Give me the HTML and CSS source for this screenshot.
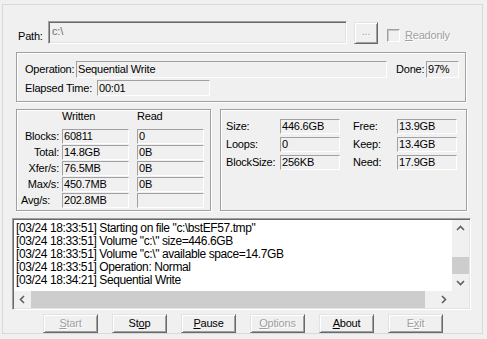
FILE: index.html
```html
<!doctype html>
<html lang="en">
  <head>
    <meta charset="utf-8" />
    <meta name="viewport" content="width=device-width, initial-scale=1" />
    <title>Disk Benchmark</title>
    <link rel="stylesheet" href="styles.css">
  </head>
  <body>
    <div class="frame">
      <div class="path-row">
        <span class="path-label">Path:</span>
        <div class="path-edit">c:\</div>
        <div class="btn browse">...</div>
        <div class="check">
          <span class="check-box"></span>
          <span class="check-text"><u>R</u>eadonly</span>
        </div>
      </div>

      <div class="group op-group">
        <div class="op-row">
          <span class="op-lbl">Operation:</span>
          <div class="field op-field">Sequential Write</div>
          <span class="done-lbl">Done:</span>
          <div class="field done-field">97%</div>
        </div>
        <div class="op-row elapsed-row">
          <span class="elapsed-lbl">Elapsed Time:</span>
          <div class="field elapsed-field">00:01</div>
        </div>
      </div>

      <div class="stats">
        <div class="group io-group">
          <div class="io-head">
            <span class="io-head-w">Written</span>
            <span>Read</span>
          </div>
          <div class="io-row">
            <span class="io-lbl">Blocks:</span>
            <div class="field io-field">60811</div>
            <div class="field io-field">0</div>
          </div>
          <div class="io-row">
            <span class="io-lbl">Total:</span>
            <div class="field io-field">14.8GB</div>
            <div class="field io-field">0B</div>
          </div>
          <div class="io-row">
            <span class="io-lbl">Xfer/s:</span>
            <div class="field io-field">76.5MB</div>
            <div class="field io-field">0B</div>
          </div>
          <div class="io-row">
            <span class="io-lbl">Max/s:</span>
            <div class="field io-field">450.7MB</div>
            <div class="field io-field">0B</div>
          </div>
          <div class="io-row">
            <span class="io-lbl io-lbl-left">Avg/s:</span>
            <div class="field io-field">202.8MB</div>
            <div class="field io-field"></div>
          </div>
        </div>

        <div class="group vol-group">
          <div class="vol-row">
            <span class="vol-lbl">Size:</span>
            <div class="field vol-field">446.6GB</div>
            <span class="vol-lbl2">Free:</span>
            <div class="field vol-field">13.9GB</div>
          </div>
          <div class="vol-row">
            <span class="vol-lbl">Loops:</span>
            <div class="field vol-field">0</div>
            <span class="vol-lbl2">Keep:</span>
            <div class="field vol-field">13.4GB</div>
          </div>
          <div class="vol-row">
            <span class="vol-lbl">BlockSize:</span>
            <div class="field vol-field">256KB</div>
            <span class="vol-lbl2">Need:</span>
            <div class="field vol-field">17.9GB</div>
          </div>
        </div>
      </div>

      <div class="log">
        <div class="log-text">
          <div>[03/24 18:33:51] Starting on file "c:\bstEF57.tmp"</div>
          <div>[03/24 18:33:51] Volume "c:\" size=446.6GB</div>
          <div>[03/24 18:33:51] Volume "c:\" available space=14.7GB</div>
          <div>[03/24 18:33:51] Operation: Normal</div>
          <div>[03/24 18:34:21] Sequential Write</div>
        </div>
        <div class="vscroll">
          <svg class="arrow" width="17" height="17" viewBox="0 0 17 17"><polyline points="5,10 8.5,6.5 12,10" /></svg>
          <div class="track"></div>
          <div class="thumb vthumb"></div>
          <svg class="arrow" width="17" height="17" viewBox="0 0 17 17"><polyline points="5,7 8.5,10.5 12,7" /></svg>
        </div>
        <div class="hscroll">
          <svg class="arrow" width="17" height="17" viewBox="0 0 17 17"><polyline points="10,5 6.5,8.5 10,12" /></svg>
          <div class="thumb hthumb"></div>
          <div class="track"></div>
          <svg class="arrow" width="17" height="17" viewBox="0 0 17 17"><polyline points="7,5 10.5,8.5 7,12" /></svg>
        </div>
        <div class="corner"></div>
      </div>

      <div class="buttons">
        <div class="btn cmd disabled"><u>S</u>tart</div>
        <div class="btn cmd">St<u>o</u>p</div>
        <div class="btn cmd"><u>P</u>ause</div>
        <div class="btn cmd disabled"><u>O</u>ptions</div>
        <div class="btn cmd"><u>A</u>bout</div>
        <div class="btn cmd disabled">E<u>x</u>it</div>
      </div>
    </div>
  </body>
</html>
```

FILE: styles.css
```css
* {
  box-sizing: border-box;
}
body {
  margin: 0;
  background: #f0f0f0;
  color: #000;
  font-family: "Liberation Sans", Arial, sans-serif;
  font-size: 11px;
  letter-spacing: -0.2px;
  line-height: 13px;
}
u {
  text-decoration: underline;
  text-underline-offset: 1px;
}

/* outer page */
.frame {
  margin: 4px 0 0 2px;
  width: 481px;
  height: 330px;
  border: 1px solid #d9d9d9;
}

/* sunken edit look */
.field {
  border: 1px solid;
  border-color: #a0a0a0 #fff #fff #a0a0a0;
  padding-left: 1px;
  white-space: nowrap;
  overflow: hidden;
}
.group {
  border: 1px solid #a0a0a0;
  box-shadow: inset 1px 1px #fff, 1px 1px #fff;
}
.btn {
  display: flex;
  align-items: center;
  justify-content: center;
  border: 1px solid;
  border-color: #e3e3e3 #696969 #696969 #e3e3e3;
  box-shadow: inset 1px 1px #fff, inset -1px -1px #a0a0a0;
  background: #f0f0f0;
}
.btn.disabled {
  color: #a0a0a0;
  text-shadow: 1px 1px #fff;
}

/* path row */
.path-row {
  display: flex;
  align-items: flex-start;
  margin-top: 16px;
  height: 23px;
}
.path-label {
  width: 45px;
  padding-left: 15px;
  margin-top: 9px;
}
.path-edit {
  width: 299px;
  height: 23px;
  border: 1px solid;
  border-color: #a0a0a0 #fff #fff #a0a0a0;
  box-shadow: inset 1px 1px #696969, inset -1px -1px #e3e3e3;
  padding: 3px 0 0 3px;
  color: #6d6d6d;
}
.browse {
  margin: 1px 0 0 7px;
  width: 24px;
  height: 22px;
  color: #a0a0a0;
  text-shadow: 1px 1px #fff;
  padding-bottom: 3px;
}
.check {
  display: flex;
  align-items: center;
  margin: 8px 0 0 9px;
  color: #a0a0a0;
}
.check-box {
  width: 13px;
  height: 13px;
  border: 1px solid;
  border-color: #a0a0a0 #fff #fff #a0a0a0;
  box-shadow: inset 1px 1px #c8c8c8;
}
.check-text {
  margin-left: 5px;
  text-shadow: 1px 1px #fff;
}

/* operation group */
.op-group {
  margin: 8px 0 0 13px;
  width: 450px;
  height: 50px;
  padding: 8px 0 0 8px;
}
.op-row {
  display: flex;
  align-items: center;
  height: 17px;
}
.elapsed-row {
  margin-top: 2px;
  height: 16px;
}
.op-lbl {
  width: 51px;
}
.op-field {
  width: 311px;
  height: 17px;
  line-height: 14px;
}
.done-lbl {
  width: 30px;
  margin-left: 9px;
}
.done-field {
  width: 33px;
  height: 17px;
  line-height: 14px;
}
.elapsed-lbl {
  width: 72px;
}
.elapsed-field {
  width: 113px;
  height: 16px;
  line-height: 14px;
}

/* statistics */
.stats {
  display: flex;
  gap: 9px;
  margin: 7px 0 0 13px;
}
.io-group {
  width: 195px;
  height: 102px;
}
.io-head {
  display: flex;
  height: 19px;
  padding-left: 45px;
}
.io-head-w {
  width: 75px;
}
.io-row {
  display: flex;
  align-items: center;
  height: 15px;
  margin-bottom: 1px;
}
.io-lbl {
  width: 45px;
  padding-right: 3px;
  text-align: right;
}
.io-lbl-left {
  text-align: left;
  padding-left: 4px;
}
.io-field {
  width: 67px;
  height: 15px;
}
.io-field + .io-field {
  margin-left: 8px;
}
.vol-group {
  width: 247px;
  height: 102px;
  padding: 9px 0 0 5px;
}
.vol-row {
  display: flex;
  align-items: center;
  height: 15px;
  margin-bottom: 3px;
}
.vol-lbl {
  width: 54px;
}
.vol-lbl2 {
  width: 44px;
  margin-left: 13px;
}
.vol-field {
  width: 60px;
  height: 15px;
}

/* log list */
.log {
  display: grid;
  grid-template-columns: 1fr 17px;
  grid-template-rows: 1fr 17px;
  margin: 7px 0 0 9px;
  width: 459px;
  height: 92px;
  padding: 1px;
  border: 1px solid;
  border-color: #a0a0a0 #fff #fff #a0a0a0;
  box-shadow: inset 1px 1px #696969, inset -1px -1px #e3e3e3;
  background: #fff;
}
.log-text {
  padding: 2px 0 0 2px;
  font-size: 12px;
  letter-spacing: -0.4px;
  line-height: 13px;
  white-space: nowrap;
  overflow: hidden;
}
.vscroll {
  display: flex;
  flex-direction: column;
  background: #f0f0f0;
}
.hscroll {
  display: flex;
  background: #f0f0f0;
}
.arrow {
  flex: none;
}
.arrow polyline {
  fill: none;
  stroke: #606060;
  stroke-width: 1.6;
}
.track {
  flex: 1;
}
.thumb {
  background: #cdcdcd;
}
.vthumb {
  height: 17px;
}
.hthumb {
  width: 394px;
}
.corner {
  background: #f0f0f0;
}

/* command buttons */
.buttons {
  display: flex;
  gap: 14px;
  margin: 4px 0 0 40px;
}
.cmd {
  width: 55px;
  height: 19px;
}
```
